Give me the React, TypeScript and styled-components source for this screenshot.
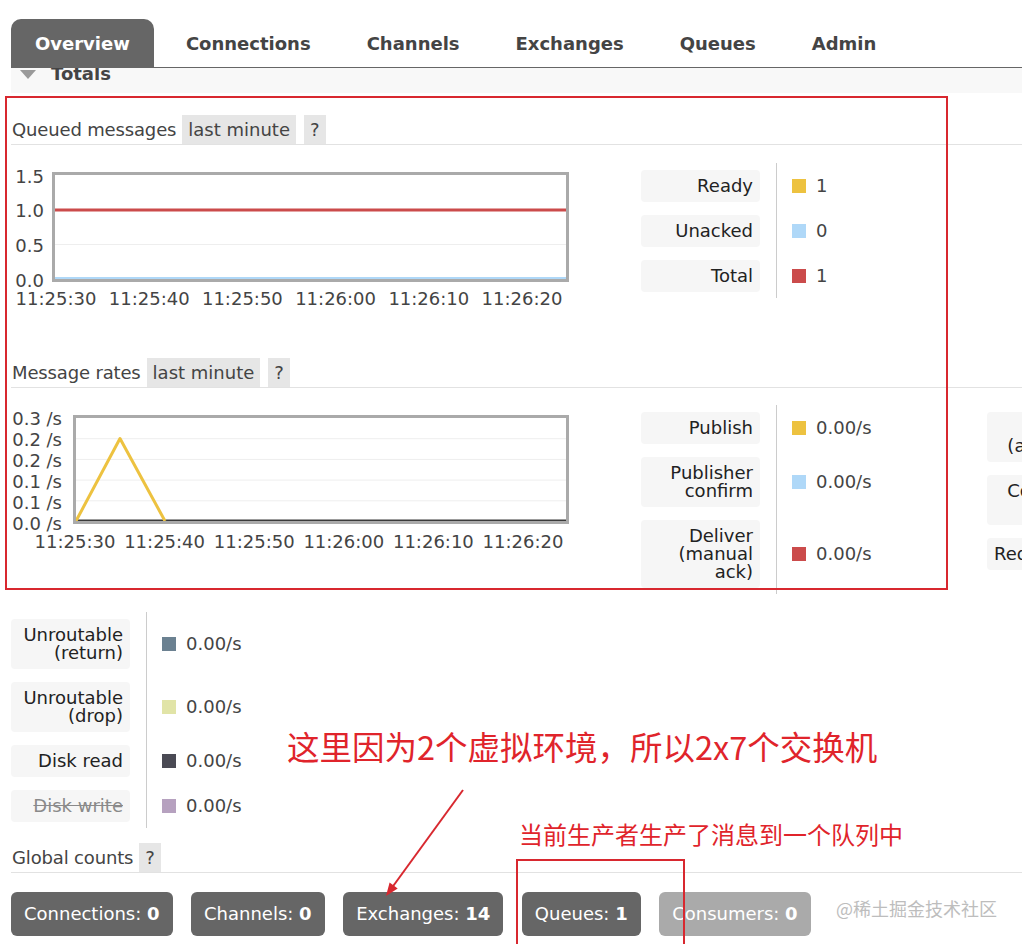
import React from "react";
import styled, { createGlobalStyle } from "styled-components";

const GlobalStyle = createGlobalStyle`
  html, body {
    margin: 0;
    padding: 0;
    background: #fff;
  }
  body {
    font-family: "DejaVu Sans", Verdana, sans-serif;
  }
`;

const FONT = `"DejaVu Sans", Verdana, sans-serif`;
const CJK = `"Noto Sans CJK SC", "Noto Sans", sans-serif`;
const RED = "#d8282f";

const Page = styled.div`
    position: relative;
    width: 1022px;
    height: 944px;
    overflow: hidden;
    box-sizing: border-box;
    padding: 19px 0 0 11px;
    font-family: ${FONT};
    font-size: 18px;
    color: #444;
`;

// Top navigation tabs
const Tabs = styled.ul`
    display: flex;
    margin: 0;
    padding: 0;
    list-style: none;
    border-bottom: 1px solid #666;
`;

const Tab = styled.li<{ $active?: boolean }>`
    height: 48px;
    line-height: 50px;
    padding: 0 24px;
    margin-right: 8px;
    font-weight: bold;
    border-radius: 10px 10px 0 0;
    background: ${p => (p.$active ? "#666" : "transparent")};
    color: ${p => (p.$active ? "#fff" : "#444")};
`;

const TotalsBar = styled.div`
    display: flex;
    align-items: flex-start;
    height: 25px;
    overflow: hidden;
    padding-left: 9px;
    background: #f8f8f8;
`;

const Caret = styled.span`
    width: 0;
    height: 0;
    margin: 2px 15px 0 0;
    border-left: 8px solid transparent;
    border-right: 8px solid transparent;
    border-top: 9px solid #9a9a9a;
`;

const TotalsLabel = styled.span`
    margin-top: -3px;
    line-height: 18px;
    font-weight: bold;
    color: #444;
`;

// Section heading with its pills
const SectionTitle = styled.div<{ $top: number }>`
    display: flex;
    height: 29px;
    margin-top: ${p => p.$top}px;
    padding-left: 1px;
    line-height: 29px;
    border-bottom: 1px solid #e2e2e2;
`;

const TitleText = styled.span`
    margin-right: 6px;
    letter-spacing: -0.15px;
`;

const Pill = styled.span`
    margin-right: 8px;
    padding: 0 6px;
    background: #e6e6e6;
`;

const ChartRow = styled.div<{ $top: number }>`
    display: flex;
    align-items: flex-start;
    margin-top: ${p => p.$top}px;
`;

const ChartSvg = styled.svg`
    flex: none;
    display: block;
    margin: 0 69px 0 1px;
`;

// Legend tables
const Legend = styled.div<{ $top?: number; $valueWidth?: number }>`
    flex: none;
    display: grid;
    grid-template-columns: 135px ${p => p.$valueWidth ?? 211}px;
    margin-top: ${p => p.$top ?? 0}px;
`;

const LabelCell = styled.div`
    padding: 6.5px 16px 6.5px 0;
`;

const LabelBox = styled.div<{ $struck?: boolean }>`
    padding: 7px;
    border-radius: 4px;
    background: #f6f6f6;
    line-height: 18px;
    text-align: right;
    white-space: nowrap;
    color: ${p => (p.$struck ? "#8a8a8a" : "#222")};
    text-decoration: ${p => (p.$struck ? "line-through" : "none")};
`;

const ValueCell = styled.div`
    display: flex;
    align-items: center;
    gap: 10px;
    padding-left: 15px;
    border-left: 1px solid #ccc;
`;

const Swatch = styled.span<{ $color: string }>`
    flex: none;
    width: 14px;
    height: 14px;
    background: ${p => p.$color};
`;

const LegendRow = styled.div`
    margin-top: 18px;
`;

// Global counts
const Counts = styled.div`
    display: flex;
    gap: 18.5px;
    margin-top: 19px;
`;

const CountButton = styled.span<{ $muted?: boolean }>`
    height: 44px;
    line-height: 44px;
    padding: 0 13px;
    border-radius: 6px;
    color: #fff;
    background: ${p => (p.$muted ? "#aaa" : "#666")};

    b {
        font-weight: bold;
    }
`;

// Annotations drawn over the screenshot
const Frame = styled.div<{ $l: number; $t: number; $w: number; $h: number }>`
    position: absolute;
    left: ${p => p.$l}px;
    top: ${p => p.$t}px;
    width: ${p => p.$w}px;
    height: ${p => p.$h}px;
    box-sizing: border-box;
    border: 2px solid ${RED};
`;

const Note = styled.div<{ $l: number; $t: number; $size: number }>`
    position: absolute;
    left: ${p => p.$l}px;
    top: ${p => p.$t}px;
    font-family: ${CJK};
    font-size: ${p => p.$size}px;
    line-height: 1;
    white-space: nowrap;
    color: #e0242b;
`;

const Arrow = styled.svg`
    position: absolute;
    left: 375px;
    top: 780px;
`;

const Watermark = styled.div`
    position: absolute;
    left: 836px;
    top: 898px;
    font-family: ${CJK};
    font-size: 18px;
    line-height: 20px;
    color: #bdbdbd;
`;

type Item = { label: string[]; color?: string; value?: string; struck?: boolean };

const queued: Item[] = [
    { label: ["Ready"], color: "#edc240", value: "1" },
    { label: ["Unacked"], color: "#afd8f8", value: "0" },
    { label: ["Total"], color: "#cb4b4b", value: "1" },
];

const ratesA: Item[] = [
    { label: ["Publish"], color: "#edc240", value: "0.00/s" },
    { label: ["Publisher", "confirm"], color: "#afd8f8", value: "0.00/s" },
    { label: ["Deliver", "(manual", "ack)"], color: "#cb4b4b", value: "0.00/s" },
];

const ratesB: Item[] = [
    { label: ["Deliver", "(auto ack)"] },
    { label: ["Consumer", "ack"] },
    { label: ["Redelivered"] },
];

const ratesC: Item[] = [
    { label: ["Unroutable", "(return)"], color: "#6b8191", value: "0.00/s" },
    { label: ["Unroutable", "(drop)"], color: "#e1e4a7", value: "0.00/s" },
    { label: ["Disk read"], color: "#4a4a54", value: "0.00/s" },
    { label: ["Disk write"], color: "#b6a1bf", value: "0.00/s", struck: true },
];

const times = ["11:25:30", "11:25:40", "11:25:50", "11:26:00", "11:26:10", "11:26:20"];

const LegendTable: React.FC<{ items: Item[]; top?: number; valueWidth?: number }> = ({ items, top, valueWidth }) => (
    <Legend $top={top} $valueWidth={valueWidth}>
        {items.map(it => (
            <React.Fragment key={it.label.join(" ")}>
                <LabelCell>
                    <LabelBox $struck={it.struck}>
                        {it.label.map((l, i) => (
                            <div key={i}>{l}</div>
                        ))}
                    </LabelBox>
                </LabelCell>
                <ValueCell>
                    {it.color && <Swatch $color={it.color} />}
                    {it.value}
                </ValueCell>
            </React.Fragment>
        ))}
    </Legend>
);

const QueuedChart: React.FC = () => (
    <ChartSvg width={560} height={150} fontFamily={FONT} fontSize={18} fill="#444">
        <line x1={43} x2={555} y1={84.5} y2={84.5} stroke="#eee" strokeWidth={1} />
        <line x1={43} x2={555} y1={50} y2={50} stroke="#cb4b4b" strokeWidth={3} />
        <line x1={43} x2={555} y1={118.5} y2={118.5} stroke="#afd8f8" strokeWidth={3} />
        <rect x={41.5} y={13.5} width={514} height={107} fill="none" stroke="#aaa" strokeWidth={3} />
        {["1.5", "1.0", "0.5", "0.0"].map((t, i) => (
            <text key={t} x={32} y={[22.5, 56.5, 91.5, 126.5][i]} textAnchor="end">
                {t}
            </text>
        ))}
        {times.map((t, i) => (
            <text key={t} x={44 + i * 93.2} y={144.5} textAnchor="middle">
                {t}
            </text>
        ))}
    </ChartSvg>
);

const RatesChart: React.FC = () => (
    <ChartSvg width={560} height={150} fontFamily={FONT} fontSize={18} fill="#444">
        {[33.7, 54.4, 75.1, 95.8].map(y => (
            <line key={y} x1={64} x2={555} y1={y} y2={y} stroke="#eee" strokeWidth={1} />
        ))}
        <line x1={64} x2={555} y1={116} y2={116} stroke="#3a3a3a" strokeWidth={3} />
        <polyline points="64,116 108,33.5 153,116" fill="none" stroke="#edc240" strokeWidth={3} strokeLinejoin="round" />
        <rect x={62.5} y={11.5} width={493} height={106} fill="none" stroke="#aaa" strokeWidth={3} />
        {["0.3 /s", "0.2 /s", "0.2 /s", "0.1 /s", "0.1 /s", "0.0 /s"].map((t, i) => (
            <text key={i} x={50} y={19.5 + i * 21} textAnchor="end">
                {t}
            </text>
        ))}
        {times.map((t, i) => (
            <text key={t} x={63 + i * 89.6} y={142.5} textAnchor="middle">
                {t}
            </text>
        ))}
    </ChartSvg>
);

export default function App() {
    return (
        <Page>
            <GlobalStyle />

            <Tabs>
                <Tab $active>Overview</Tab>
                <Tab>Connections</Tab>
                <Tab>Channels</Tab>
                <Tab>Exchanges</Tab>
                <Tab>Queues</Tab>
                <Tab>Admin</Tab>
            </Tabs>

            <TotalsBar>
                <Caret />
                <TotalsLabel>Totals</TotalsLabel>
            </TotalsBar>

            <SectionTitle $top={22}>
                <TitleText>Queued messages</TitleText>
                <Pill>last minute</Pill>
                <Pill>?</Pill>
            </SectionTitle>
            <ChartRow $top={15}>
                <QueuedChart />
                <LegendTable items={queued} top={3} />
            </ChartRow>

            <SectionTitle $top={48}>
                <TitleText>Message rates</TitleText>
                <Pill>last minute</Pill>
                <Pill>?</Pill>
            </SectionTitle>
            <ChartRow $top={17}>
                <RatesChart />
                <LegendTable items={ratesA} />
                <LegendTable items={ratesB} />
            </ChartRow>
            <LegendRow>
                <LegendTable items={ratesC} />
            </LegendRow>

            <SectionTitle $top={15}>
                <TitleText>Global counts</TitleText>
                <Pill>?</Pill>
            </SectionTitle>
            <Counts>
                <CountButton>Connections: <b>0</b></CountButton>
                <CountButton>Channels: <b>0</b></CountButton>
                <CountButton>Exchanges: <b>14</b></CountButton>
                <CountButton>Queues: <b>1</b></CountButton>
                <CountButton $muted>Consumers: <b>0</b></CountButton>
            </Counts>

            {/* screenshot annotations */}
            <Frame $l={5} $t={96} $w={943} $h={494} />
            <Frame $l={516} $t={859} $w={169} $h={120} />
            <Note $l={287} $t={730} $size={32.5}>这里因为2个虚拟环境，所以2x7个交换机</Note>
            <Note $l={519} $t={822} $size={24}>当前生产者生产了消息到一个队列中</Note>
            <Arrow width={100} height={125}>
                <line x1={88} y1={10} x2={16} y2={109} stroke={RED} strokeWidth={2} />
                <polygon points="11,116 22.7,108.4 14.6,102.6" fill={RED} />
            </Arrow>
            <Watermark>@稀土掘金技术社区</Watermark>
        </Page>
    );
}
